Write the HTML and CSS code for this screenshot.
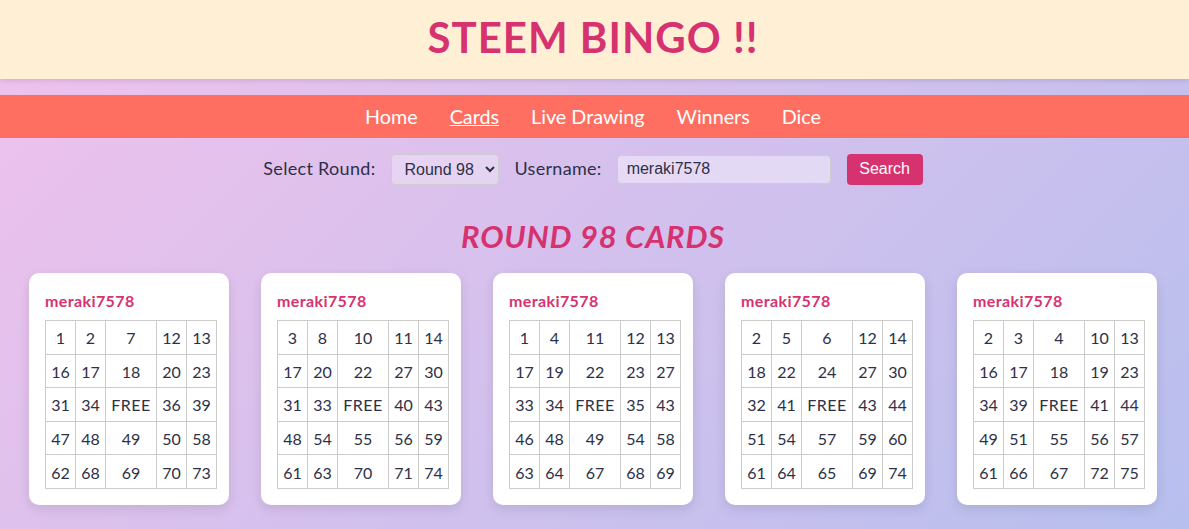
FILE: index.html
```html
<!DOCTYPE html>
<html>
  <head>
    <title>Steem Bingo</title>
    <meta charset="utf-8">
    <link rel="stylesheet" href="styles.css">
  </head>
  <body>
  <header class="top">
    <h1>STEEM BINGO !!</h1>
  </header>
  <nav class="menu">
    <a href="#">Home</a>
    <a href="#" class="current">Cards</a>
    <a href="#">Live Drawing</a>
    <a href="#">Winners</a>
    <a href="#">Dice</a>
  </nav>
  <form class="search">
    <label for="round">Select Round:</label>
    <select id="round"><option>Round 98</option></select>
    <label for="user">Username:</label>
    <input id="user" type="text" value="meraki7578">
    <button type="button">Search</button>
  </form>
  <h2 class="round-title">ROUND 98 CARDS</h2>
  <main class="cards">
    <section class="card">
      <h3>meraki7578</h3>
      <table>
        <tr><td>1</td><td>2</td><td>7</td><td>12</td><td>13</td></tr>
        <tr><td>16</td><td>17</td><td>18</td><td>20</td><td>23</td></tr>
        <tr><td>31</td><td>34</td><td class="free">FREE</td><td>36</td><td>39</td></tr>
        <tr><td>47</td><td>48</td><td>49</td><td>50</td><td>58</td></tr>
        <tr><td>62</td><td>68</td><td>69</td><td>70</td><td>73</td></tr>
      </table>
    </section>
    <section class="card">
      <h3>meraki7578</h3>
      <table>
        <tr><td>3</td><td>8</td><td>10</td><td>11</td><td>14</td></tr>
        <tr><td>17</td><td>20</td><td>22</td><td>27</td><td>30</td></tr>
        <tr><td>31</td><td>33</td><td class="free">FREE</td><td>40</td><td>43</td></tr>
        <tr><td>48</td><td>54</td><td>55</td><td>56</td><td>59</td></tr>
        <tr><td>61</td><td>63</td><td>70</td><td>71</td><td>74</td></tr>
      </table>
    </section>
    <section class="card">
      <h3>meraki7578</h3>
      <table>
        <tr><td>1</td><td>4</td><td>11</td><td>12</td><td>13</td></tr>
        <tr><td>17</td><td>19</td><td>22</td><td>23</td><td>27</td></tr>
        <tr><td>33</td><td>34</td><td class="free">FREE</td><td>35</td><td>43</td></tr>
        <tr><td>46</td><td>48</td><td>49</td><td>54</td><td>58</td></tr>
        <tr><td>63</td><td>64</td><td>67</td><td>68</td><td>69</td></tr>
      </table>
    </section>
    <section class="card">
      <h3>meraki7578</h3>
      <table>
        <tr><td>2</td><td>5</td><td>6</td><td>12</td><td>14</td></tr>
        <tr><td>18</td><td>22</td><td>24</td><td>27</td><td>30</td></tr>
        <tr><td>32</td><td>41</td><td class="free">FREE</td><td>43</td><td>44</td></tr>
        <tr><td>51</td><td>54</td><td>57</td><td>59</td><td>60</td></tr>
        <tr><td>61</td><td>64</td><td>65</td><td>69</td><td>74</td></tr>
      </table>
    </section>
    <section class="card">
      <h3>meraki7578</h3>
      <table>
        <tr><td>2</td><td>3</td><td>4</td><td>10</td><td>13</td></tr>
        <tr><td>16</td><td>17</td><td>18</td><td>19</td><td>23</td></tr>
        <tr><td>34</td><td>39</td><td class="free">FREE</td><td>41</td><td>44</td></tr>
        <tr><td>49</td><td>51</td><td>55</td><td>56</td><td>57</td></tr>
        <tr><td>61</td><td>66</td><td>67</td><td>72</td><td>75</td></tr>
      </table>
    </section>
  </main>
  </body>
</html>
```

FILE: styles.css
```css
html {
  height: 100%;
  }
body {
  margin: 0;
  height: 100%;
  overflow: hidden;
  background: linear-gradient(135deg, #f0c2ec 0%, #b7bfee 100%);
  color: #2d3047;
  font: 18px "Lato", sans-serif;
  }
.top {
  height: 79px;
  padding-right: 3px;
  background: #ffefd5;
  box-shadow: 0 2px 5px rgba(0,0,0,0.1);
  text-align: center;
  }
.top h1 {
  margin: 0;
  padding-top: 11px;
  color: #d63270;
  font: bold 42px/52px "Lato", sans-serif;
  letter-spacing: 1px;
  }
.menu {
  display: flex;
  justify-content: center;
  gap: 32px;
  height: 43px;
  margin-top: 16px;
  padding-right: 3px;
  background: #ff6f61;
  align-items: center;
  }
.menu a {
  color: white;
  font-size: 19.75px;
  line-height: 41px;
  text-decoration: none;
  }
.menu a.current {
  text-decoration: underline;
  }
.search {
  display: flex;
  justify-content: center;
  align-items: center;
  height: 31px;
  margin-top: 16px;
  padding-right: 3px;
  font-size: 18px;
  letter-spacing: 0.3px;
  }
.search label {
  line-height: 29px;
  padding-bottom: 2px;
  }
.search select {
  width: 108px;
  height: 31px;
  margin: 0 15px 0 16px;
  padding: 0 8px;
  background: rgba(255,255,255,0.3);
  border: 1px solid #ccc;
  border-radius: 4px;
  color: #2d3047;
  font: 16px "Liberation Sans", sans-serif;
  }
.search input {
  box-sizing: border-box;
  width: 214px;
  height: 29px;
  margin: 0 16px 0 15px;
  padding: 0 9px 2px;
  background: rgba(255,255,255,0.4);
  border: 1px solid #ccc;
  border-radius: 4px;
  color: #2d3047;
  font: 16px "Liberation Sans", sans-serif;
  }
.search button {
  width: 76px;
  height: 31px;
  padding: 0 0 2px;
  background: #d63270;
  border: 0;
  border-radius: 4px;
  color: white;
  font: 16px "Liberation Sans", sans-serif;
  }
.round-title {
  margin: 31px 0 0;
  padding-right: 3px;
  color: #d63270;
  font: italic bold 31px/40px "Lato", sans-serif;
  letter-spacing: 0.8px;
  text-align: center;
  }
.cards {
  display: flex;
  justify-content: center;
  gap: 32px;
  margin-top: 17px;
  padding-right: 3px;
  }
.card {
  box-sizing: border-box;
  width: 200px;
  height: 232px;
  padding: 16px;
  background: white;
  border-radius: 10px;
  box-shadow: 0 4px 12px rgba(0,0,0,0.1);
  }
.card h3 {
  margin: 2px 0 9px;
  color: #d63270;
  font: bold 16px/20px "Lato", sans-serif;
  letter-spacing: 0.4px;
  }
.card table {
  width: 172px;
  table-layout: fixed;
  border-collapse: collapse;
  }
.card td {
  width: 29px;
  height: 31.6px;
  padding: 1px 0 0;
  border: 1px solid #ccc;
  font-size: 16px;
  text-align: center;
  }
.card td:nth-child(3) {
  width: 50px;
  }
.card td.free {
  letter-spacing: 0.5px;
  }
```
